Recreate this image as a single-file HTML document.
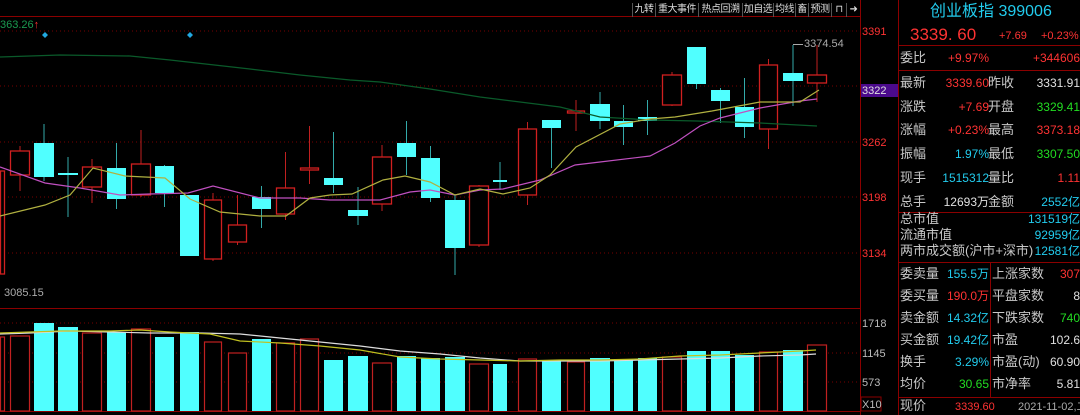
<!DOCTYPE html>
<html><head><meta charset="utf-8"><style>
*{margin:0;padding:0;box-sizing:border-box}
body{width:1080px;height:415px;background:#000;overflow:hidden;position:relative;font-family:"Liberation Sans","Noto Sans CJK SC",sans-serif;font-size:12px;color:#c0c0c0}
svg{position:absolute;left:0;top:0}
.t{position:absolute;white-space:nowrap;line-height:14px}
.tb{position:absolute;top:3px;height:14px;font-size:10px;color:#ddd;line-height:14px;text-align:center;border-left:1px solid #555;white-space:nowrap;overflow:hidden;letter-spacing:-0.5px}
.lab{color:#c8c8c8;font-size:13px}
.r{color:#ff3333}.g{color:#22dd22}.c{color:#22ccee}.w{color:#e0e0e0}
</style></head><body>
<svg id="s" width="1080" height="415" xmlns="http://www.w3.org/2000/svg">
<line x1="0" y1="16.5" x2="860" y2="16.5" stroke="#8b0000"/>
<g stroke="#700" stroke-dasharray="1,3">
<line x1="0" y1="31" x2="860" y2="31"/><line x1="0" y1="86" x2="860" y2="86"/><line x1="0" y1="142" x2="860" y2="142"/><line x1="0" y1="197" x2="860" y2="197"/><line x1="0" y1="253" x2="860" y2="253"/>
<line x1="0" y1="323" x2="860" y2="323"/><line x1="0" y1="353" x2="860" y2="353"/><line x1="0" y1="382" x2="860" y2="382"/>
</g>
<line x1="0" y1="308.5" x2="860" y2="308.5" stroke="#8b0000"/>
<line x1="0" y1="411.5" x2="860" y2="411.5" stroke="#8b0000"/>
<line x1="860.5" y1="0" x2="860.5" y2="415" stroke="#8b0000"/>
<line x1="898.5" y1="0" x2="898.5" y2="415" stroke="#8b0000"/>
<rect x="861" y="84" width="37" height="13" fill="#4b0a8c"/>
<g id="cd"></g>
<polyline fill="none" stroke="#0a5a2a" stroke-width="1.3" points="0,57 60,55 130,56 170,60 250,69 300,75 350,80 380,82 430,89 480,97 560,107 600,117 650,120 697,121 760,123 817,126"/>
<polyline fill="none" stroke="#c050c0" stroke-width="1.2" points="0,167 45,183 80,188 120,195 150,194 188,193 213,186 260,198 300,198 330,200 380,200 410,192 430,190 455,195 480,190 503,189 540,180 575,165 600,162 650,156 675,143 700,126 720,118 760,108 800,101 817,99"/>
<polyline fill="none" stroke="#b0b040" stroke-width="1.2" points="0,216 45,205 70,195 93,168 125,176 165,178 190,199 220,212 260,216 286,216 310,198 330,195 352,194 383,180 405,176 430,182 455,195 480,189 503,194 530,188 550,175 576,147 620,124 650,119 675,117 712,111 760,102 800,102 819,90"/>
<polyline fill="none" stroke="#ddd" stroke-width="1.2" points="0,334 30,333 70,331 110,332 150,333 200,333 240,334 280,338 320,342 360,346 400,351 440,354 480,358 520,361 560,361 600,361 640,360 680,359 720,358 760,356 800,355 816,354"/>
<polyline fill="none" stroke="#c0c020" stroke-width="1.2" points="0,333 60,331 110,331 140,330 170,332 210,334 240,341 280,343 320,346 360,350 400,357 440,359 480,360 520,361 560,360 600,360 640,359 680,356 720,355 760,353 800,351 816,350"/>
<polygon points="45,32 48,35 45,38 42,35" fill="#22a8e0"/><polygon points="190,32 193,35 190,38 187,35" fill="#22a8e0"/>
<line x1="793" y1="44.5" x2="803" y2="44.5" stroke="#aaa"/>
<rect x="861" y="397" width="20" height="14" fill="none" stroke="#8b0000"/>
</svg>
<script>
var C=[[0,5,1,171,274,171,274],[10,30,1,151,175,146,191],[34,54,0,143,177,124,181],[58,78,0,173,175,157,217],[82,102,1,167,187,159,203],[107,126,0,168,199,143,209],[131,151,1,164,195,130,197],[155,174,0,166,193,165,207],[180,199,0,195,256,195,256],[204,222,1,200,259,193,261],[228,247,1,225,242,195,245],[252,271,0,197,209,186,228],[276,295,1,188,214,152,220],[300,319,1,168,170,126,184],[324,343,0,178,185,132,193],[348,368,0,210,216,187,225],[372,392,1,157,204,145,211],[397,416,0,143,157,121,175],[421,440,0,158,198,146,202],[445,465,0,200,248,195,275],[469,489,1,186,245,185,247],[493,507,0,180,182,162,190],[518,537,1,129,195,122,205],[542,561,0,120,128,120,168],[567,585,1,111,113,100,131],[590,610,0,104,121,92,129],[614,633,0,121,127,105,145],[638,657,0,117,121,100,135],[662,682,1,75,105,72,106],[687,706,0,47,84,47,89],[711,730,0,90,101,88,123],[735,754,0,107,127,78,138],[759,778,1,65,129,59,149],[783,803,0,73,81,45,106],[807,827,1,75,83,45,102]];
var V=[337,336,323,327,333,332,329,337,332,342,353,339,343,339,360,356,363,356,358,357,364,364,359,361,362,358,359,358,357,351,351,355,352,350,345];
var h='';C.forEach(function(c,i){var x0=c[0],x1=c[1],m=(x0+x1)/2,col=c[2]?'#d02020':'#50ffff',ws=c[2]?'#c02020':'#3aa';
h+='<line x1="'+m+'" y1="'+c[5]+'" x2="'+m+'" y2="'+c[6]+'" stroke="'+ws+'"/>';
if(c[2])h+='<rect x="'+(x0+.5)+'" y="'+c[3]+'" width="'+(x1-x0-1)+'" height="'+Math.max(2,c[4]-c[3])+'" fill="#000" stroke="'+col+'" stroke-width="1.3"/>';
else h+='<rect x="'+x0+'" y="'+c[3]+'" width="'+(x1-x0)+'" height="'+Math.max(2,c[4]-c[3])+'" fill="'+col+'"/>';
var v=V[i];
if(c[2])h+='<rect x="'+(x0+.5)+'" y="'+v+'" width="'+(x1-x0-1)+'" height="'+(411-v)+'" fill="#000" stroke="#c02020" stroke-width="1.2"/>';
else h+='<rect x="'+x0+'" y="'+v+'" width="'+(x1-x0)+'" height="'+(411-v)+'" fill="#50ffff"/>';});
document.getElementById('cd').innerHTML=h;
</script>
<div class="t" style="left:0;top:18px;font-size:11px;color:#1a9a50">363.26<span class="r">↑</span></div>
<div class="t" style="left:804px;top:37px;font-size:11px;color:#aaa">3374.54</div>
<div class="t" style="left:4px;top:286px;font-size:11px;color:#aaa">3085.15</div>
<div class="t r" style="left:862px;top:25px;font-size:11px">3391</div>
<div class="t" style="left:862px;top:84px;font-size:11px;color:#e0e0e0">3322</div>
<div class="t r" style="left:862px;top:136px;font-size:11px">3262</div>
<div class="t r" style="left:862px;top:191px;font-size:11px">3198</div>
<div class="t r" style="left:862px;top:247px;font-size:11px">3134</div>
<div class="t" style="left:862px;top:317px;font-size:11px;color:#bbb">1718</div>
<div class="t" style="left:862px;top:347px;font-size:11px;color:#bbb">1145</div>
<div class="t" style="left:862px;top:376px;font-size:11px;color:#bbb">573</div>
<div class="t" style="left:862px;top:398px;font-size:11px;color:#bbb">X10</div>
<div class="tb" style="left:632px;width:23px">九转</div>
<div class="tb" style="left:655px;width:43px">重大事件</div>
<div class="tb" style="left:698px;width:44px">热点回溯</div>
<div class="tb" style="left:742px;width:31px">加自选</div>
<div class="tb" style="left:773px;width:22px">均线</div>
<div class="tb" style="left:795px;width:13px">畜</div>
<div class="tb" style="left:808px;width:23px">预测</div>
<div class="tb" style="left:831px;width:15px">⊓</div>
<div class="tb" style="left:846px;width:14px">➜</div>
<div style="position:absolute;left:898px;top:45px;width:182px;border-top:1px solid #8b0000"></div>
<div style="position:absolute;left:898px;top:70px;width:182px;border-top:1px solid #8b0000"></div>
<div style="position:absolute;left:898px;top:212px;width:182px;border-top:1px solid #8b0000"></div>
<div style="position:absolute;left:898px;top:262px;width:182px;border-top:1px solid #8b0000"></div>
<div style="position:absolute;left:898px;top:397px;width:182px;border-top:1px solid #8b0000"></div>
<div style="position:absolute;left:990px;top:262px;height:135px;border-left:1px solid #8b0000"></div>
<div class="t c" style="left:930px;top:3px;font-size:16px;line-height:18px">创业板指 399006</div>
<div class="t r" style="left:910px;top:25px;font-size:17px;line-height:20px">3339. 60</div>
<div class="t r" style="left:999px;top:29px;font-size:11px">+7.69</div>
<div class="t r" style="left:1041px;top:29px;font-size:11px">+0.23%</div>
<div id="rp"></div>
<script>
var R=[[51,'委比','+9.97%','r','',' +344606','r'],[76,'最新','3339.60','r','昨收','3331.91','w'],[100,'涨跌','+7.69','r','开盘','3329.41','g'],[123,'涨幅','+0.23%','r','最高','3373.18','r'],[147,'振幅','1.97%','c','最低','3307.50','g'],[171,'现手','1515312','c','量比','1.11','r'],[195,'总手','12693万','w','金额','2552亿','c'],
[267,'委卖量','155.5万','c','上涨家数','307','r'],[289,'委买量','190.0万','r','平盘家数','8','w'],[311,'卖金额','14.32亿','c','下跌家数','740','g'],[333,'买金额','19.42亿','c','市盈','102.6','w'],[355,'换手','3.29%','c','市盈(动)','60.90','w'],[377,'均价','30.65','g','市净率','5.81','w']];
var h='';R.forEach(function(r){h+='<div class="t lab" style="left:900px;top:'+r[0]+'px">'+r[1]+'</div><div class="t '+r[3]+'" style="right:91px;top:'+r[0]+'px;font-size:12px">'+r[2]+'</div><div class="t lab" style="left:'+(r[0]>260?992:988)+'px;top:'+r[0]+'px">'+r[4]+'</div><div class="t '+r[6]+'" style="left:1010px;top:'+r[0]+'px;font-size:12px;width:70px;text-align:right">'+r[5]+'</div>';});
document.getElementById('rp').innerHTML=h;
</script>
<div class="t lab" style="left:900px;top:212px">总市值</div><div class="t c" style="left:1010px;top:212px;width:70px;text-align:right">131519亿</div>
<div class="t lab" style="left:900px;top:228px">流通市值</div><div class="t c" style="left:1010px;top:228px;width:70px;text-align:right">92959亿</div>
<div class="t lab" style="left:900px;top:244px">两市成交额(沪市+深市)</div><div class="t c" style="left:1010px;top:244px;width:70px;text-align:right">12581亿</div>
<div class="t lab" style="left:900px;top:399px">现价</div><div class="t r" style="left:955px;top:400px;font-size:11px">3339.60</div><div class="t" style="left:1018px;top:400px;font-size:11px;color:#aaa">2021-11-02,二</div>
</body></html>
